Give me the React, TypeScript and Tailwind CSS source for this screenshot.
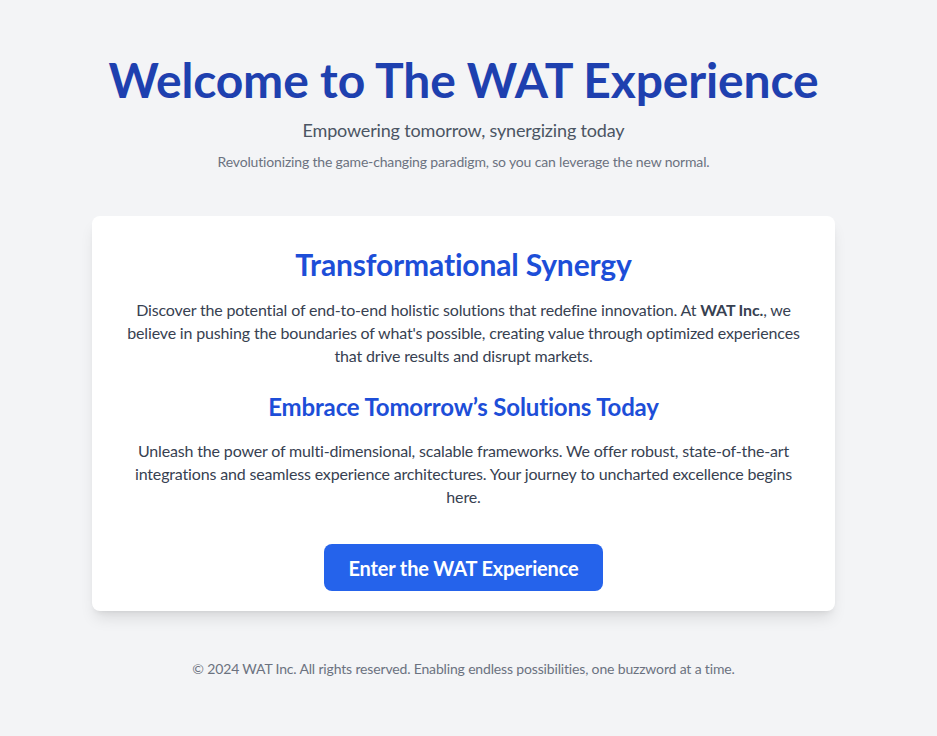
export default function App() {
  return (
    <div
      className="min-h-screen bg-[#f3f4f6] flex flex-col items-center pl-4 pr-[26px] tracking-[-0.01em]"
      style={{ fontFamily: 'Lato, "Noto Sans", sans-serif' }}
    >
      <header className="text-center pt-14 mb-11">
        <h1 className="text-5xl leading-none font-bold text-[#1e40af] mb-3">Welcome to The WAT Experience</h1>
        <p className="text-lg text-[#4b5563] mb-2">Empowering tomorrow, synergizing today</p>
        <p className="text-sm text-[#6b7280]">
          Revolutionizing the game-changing paradigm, so you can leverage the new normal.
        </p>
      </header>

      <main className="w-full max-w-[743px] bg-white rounded-lg shadow-[0_10px_15px_-3px_rgba(0,0,0,0.1),0_4px_6px_-4px_rgba(0,0,0,0.1)] px-8 pt-[30px] pb-5 text-center">
        <h2 className="text-3xl font-bold text-[#1d4ed8] mb-4">Transformational Synergy</h2>
        <p className="text-[#374151] leading-[23px] mb-6">
          Discover the potential of end-to-end holistic solutions that redefine innovation. At{' '}
          <strong>WAT Inc.</strong>, we believe in pushing the boundaries of what's possible, creating value
          through optimized experiences that drive results and disrupt markets.
        </p>
        <h3 className="text-2xl font-bold text-[#1d4ed8] mb-4">Embrace Tomorrow’s Solutions Today</h3>
        <p className="text-[#374151] leading-[23px] mb-9">
          Unleash the power of multi-dimensional, scalable frameworks. We offer robust, state-of-the-art
          integrations and seamless experience architectures. Your journey to uncharted excellence begins
          here.
        </p>
        <button className="bg-[#2563eb] text-white text-xl font-bold px-6 h-[47px] rounded-lg">
          Enter the WAT Experience
        </button>
      </main>

      <footer className="mt-12 text-sm text-[#6b7280] text-center">
        © 2024 WAT Inc. All rights reserved. Enabling endless possibilities, one buzzword at a time.
      </footer>
    </div>
  );
}
